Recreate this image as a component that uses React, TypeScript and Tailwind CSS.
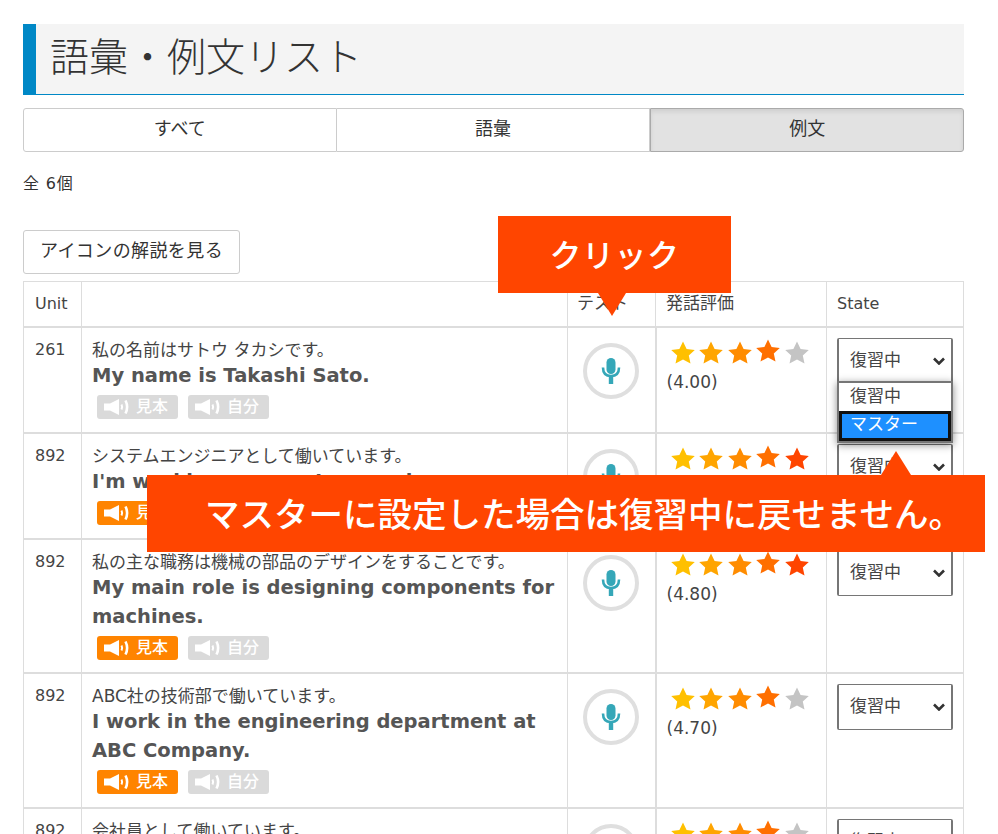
import React from "react";

const font = "font-['DejaVu_Sans','Noto_Sans_CJK_JP',sans-serif]";

const starColors = ["#ffc000", "#ffa500", "#ff8c00", "#ff6f00", "#ff4500"];

const Star = ({ color, lift }: { color: string; lift?: boolean }) => (
  <svg viewBox="0 0 24 24" className={`h-[24px] w-[24px] ${lift ? "-translate-y-[2px]" : ""}`}>
    <path
      fill={color}
      d="M12 .5l3.600 7.400 8.200 1-6 5.500 1.700 8.100L12 18.400l-7.500 4.100 1.700-8.100-6-5.500 8.200-1z"
    />
  </svg>
);

const Stars = ({ count, score }: { count: number; score: string }) => (
  <div>
    <div className="ml-[4px] flex h-[26px] items-center gap-[4.5px]">
      {[0, 1, 2, 3, 4].map((i) => (
        <Star key={i} color={i < count ? starColors[i] : "#c4c4c4"} lift={i === 3} />
      ))}
    </div>
    <div className="mt-[4px] text-[17px] leading-[24px] text-[#444]">({score})</div>
  </div>
);

const Mic = () => (
  <div className="mx-auto flex h-[56px] w-[56px] items-center justify-center rounded-full border-[4px] border-[#dfdfdf]">
    <svg viewBox="0 0 20 26" className="h-[26px] w-[20px]">
      <rect x="5.500" y="0" width="9" height="16" rx="4.500" fill="#35a7b8" />
      <path d="M2 9.500c0 5.500 3 8.500 8 8.500s8-3 8-8.500" fill="none" stroke="#35a7b8" strokeWidth="2.600" />
      <rect x="7.800" y="17" width="4.400" height="9" fill="#35a7b8" />
    </svg>
  </div>
);

const Speaker = () => (
  <svg viewBox="0 0 25 16" className="h-[16px] w-[25px] shrink-0">
    <path d="M0 4.500h6L15 0v16l-9-4.500H0z" fill="#fff" />
    <path d="M17.500 5.500c.8 1.600.8 3.400 0 5" fill="none" stroke="#fff" strokeWidth="2" />
    <path d="M21.500 1.500c2 4 2 9 0 13" fill="none" stroke="#fff" strokeWidth="2.600" />
  </svg>
);

const AudioButton = ({ label, active }: { label: string; active?: boolean }) => (
  <span
    className={`flex h-[24px] w-[81px] items-center gap-[7px] rounded-[3px] pl-[7px] text-[16px] font-medium text-white ${
      active ? "bg-[#ff8400]" : "bg-[#dadada]"
    }`}
  >
    <Speaker />
    {label}
  </span>
);

const Select = () => (
  <div className="ml-[10px] flex h-[46px] w-[116px] items-center justify-between rounded-[2px] border-x-2 border-y border-[#767676] bg-white pl-[11px] pr-[6px] text-[17px] text-[#444]">
    復習中
    <svg viewBox="0 0 12 8" className="h-[8px] w-[12px]">
      <path d="M1 1.500l5 5 5-5" fill="none" stroke="#333" strokeWidth="2.600" />
    </svg>
  </div>
);

type Row = {
  unit: string;
  ja: string;
  en: React.ReactNode;
  stars: number;
  score: string;
  sample: boolean;
  height: string;
};

const rows: Row[] = [
  { unit: "261", ja: "私の名前はサトウ タカシです。", en: "My name is Takashi Sato.", stars: 4, score: "4.00", sample: false, height: "h-[106px]" },
  { unit: "892", ja: "システムエンジニアとして働いています。", en: "I'm working as a system engineer.", stars: 5, score: "4.90", sample: true, height: "h-[106px]" },
  { unit: "892", ja: "私の主な職務は機械の部品のデザインをすることです。", en: "My main role is designing components for machines.", stars: 5, score: "4.80", sample: true, height: "h-[134px]" },
  { unit: "892", ja: "ABC社の技術部で働いています。", en: "I work in the engineering department at ABC Company.", stars: 4, score: "4.70", sample: true, height: "h-[135px]" },
  { unit: "892", ja: "会社員として働いています。", en: "I work for a company.", stars: 4, score: "4.50", sample: true, height: "h-[106px]" },
];

const App: React.FC = () => {
  return (
    <div className={`relative h-[834px] w-[998px] overflow-hidden bg-white pl-[23px] pr-[34px] pt-[24px] text-[#333] ${font}`}>
      <h1 className="flex h-[71px] items-center border-b border-l-[13px] border-b-[#0088c6] border-l-[#0088c6] bg-[#f4f4f4] pb-[2px] pl-[14px] text-[39px] font-light text-[#333]">
        語彙・例文リスト
      </h1>

      <div className="mt-[13px] grid h-[44px] grid-cols-3 text-[18px] text-[#333]">
        <div className="flex items-center justify-center rounded-l-[3px] border border-[#ccc] pb-[3px]">すべて</div>
        <div className="flex items-center justify-center border-y border-r border-[#ccc] pb-[3px]">語彙</div>
        <div className="flex items-center justify-center rounded-r-[3px] border border-[#aaa] bg-[#e2e2e2] pb-[3px] shadow-[inset_0_3px_4px_rgba(0,0,0,0.08)]">例文</div>
      </div>

      <p className="mt-[22px] text-[16px] leading-[20px] tracking-[0.8px]">全 6個</p>

      <button className="mt-[36px] block h-[44px] w-[217px] rounded-[3px] border border-[#ccc] bg-white pb-[3px] text-[18px] tracking-[0.4px] text-[#333]">
        アイコンの解説を見る
      </button>

      <table className="mt-[7px] w-[941px] table-fixed border-collapse text-[#444]">
        <thead>
          <tr className="h-[45px] border-b-2 border-[#ddd] text-left text-[16px]">
            <th className="w-[58px] border border-[#ddd] pl-[11px] font-normal">Unit</th>
            <th className="w-[486px] border border-[#ddd] font-normal"></th>
            <th className="w-[88px] border border-[#ddd] pl-[9px] text-[17px] font-normal">テスト</th>
            <th className="w-[171px] border border-[#ddd] pl-[10px] text-[17px] font-normal">発話評価</th>
            <th className="border border-[#ddd] pl-[10px] font-normal">State</th>
          </tr>
        </thead>
        <tbody>
          {rows.map((r, i) => (
            <tr key={i} className={`${r.height} border-b-2 border-[#ddd] align-top`}>
              <td className="border-x border-[#ddd] pl-[11px] pt-[11px] text-[16px] leading-[22px]">{r.unit}</td>
              <td className="border-x border-[#ddd] pl-[10px] pt-[11px]">
                <div className="text-[17px] leading-[22px] text-[#444]">{r.ja}</div>
                <div className="text-[19.500px] font-bold leading-[29px] text-[#555]">{r.en}</div>
                <div className="ml-[5px] mt-[5px] flex gap-[10px]">
                  <AudioButton label="見本" active={r.sample} />
                  <AudioButton label="自分" />
                </div>
              </td>
              <td className="border-x border-r-2 border-[#ddd] pt-[15px]">
                <Mic />
              </td>
              <td className="border-x border-[#ddd] pl-[10px] pt-[12px]">
                <Stars count={r.stars} score={r.score} />
              </td>
              <td className="border-x border-[#ddd] pt-[10px]">
                <Select />
              </td>
            </tr>
          ))}
        </tbody>
      </table>

      {/* dropdown opened on first row */}
      <div className="absolute left-[837px] top-[381px] w-[116px] border-2 border-[#767676] bg-white text-[17px] leading-[26px] text-[#444] shadow-[0_2px_8px_rgba(0,0,0,0.45)]">
        <div className="h-[28px] pl-[11px]">復習中</div>
        <div className="h-[30px] border-[3px] border-[#111] bg-[#1e90ff] pl-[8px] leading-[20px] text-white">マスター</div>
      </div>

      {/* callouts */}
      <div className="absolute left-[498px] top-[216px] flex h-[77px] w-[233px] items-center justify-center bg-[#ff4500] pt-[3px] text-[32px] font-medium tracking-[0.5px] text-white">
        クリック
      </div>
      <div className="absolute left-[598px] top-[293px] h-0 w-0 border-x-[14px] border-t-[23px] border-x-transparent border-t-[#ff4500]" />

      <div className="absolute left-[147px] top-[475px] flex h-[77px] w-[838px] items-center justify-end bg-[#ff4500] pr-[22px] pt-[5px] text-[34.500px] font-medium text-white">
        マスターに設定した場合は復習中に戻せません。
      </div>
      <div className="absolute left-[881px] top-[451px] h-0 w-0 border-x-[15px] border-b-[24px] border-x-transparent border-b-[#ff4500]" />
    </div>
  );
};

export default App;
